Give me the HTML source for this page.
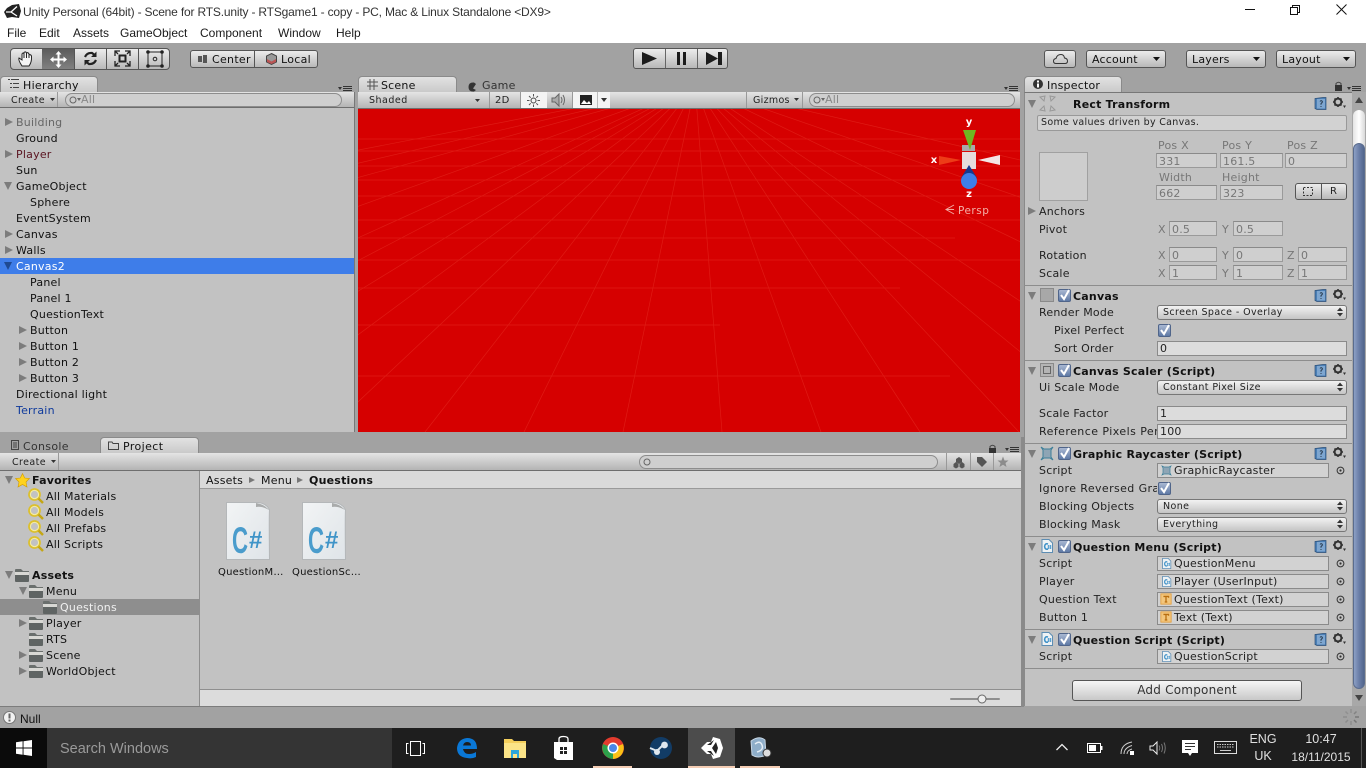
<!DOCTYPE html>
<html><head><meta charset="utf-8"><title>Unity</title>
<style>
html,body{margin:0;padding:0;width:1366px;height:768px;overflow:hidden;background:#a2a2a2}
*{box-sizing:border-box}
div,span{position:absolute}
svg{position:absolute;overflow:visible}
.u{font:11px/16px "DejaVu Sans","Liberation Sans",sans-serif;color:#111;white-space:nowrap;height:16px;margin-top:1px;letter-spacing:.22px}
.w{font:12px/16px "Liberation Sans",sans-serif;color:#1a1a1a;white-space:nowrap;height:16px}
.l{color:#222}
.g{color:#777}
.b{font-weight:bold;color:#111}
.tb{background:linear-gradient(#e4e4e4,#b4b4b4);height:16px;border-bottom:1px solid #6e6e6e}
.btn{background:linear-gradient(#ececec,#b8b8b8);border:1px solid #555;border-radius:3px;height:18px}
.tab{background:linear-gradient(#e2e2e2,#c8c8c8);border-radius:4px 4px 0 0;border:1px solid #8a8a8a;border-bottom:none}
.f{background:#cfcfcf;border:1px solid #9a9a9a;border-top-color:#8a8a8a;height:15px;font:11px/15px "DejaVu Sans",sans-serif;color:#777;padding-left:2px;white-space:nowrap;letter-spacing:.2px}
.fd{background:#dcdcdc;color:#222;border-color:#8a8a8a;line-height:13px}
.o{background:#d2d2d2;border:1px solid #8a8a8a;height:15px;left:1157px;width:172px;font:11px/13px "DejaVu Sans",sans-serif;color:#222;padding-left:16px;white-space:nowrap;letter-spacing:.2px}
.dd{background:linear-gradient(#f2f2f2,#c4c4c4);border:1px solid #777;border-radius:3px;height:15px;left:1157px;width:190px;font:9.5px/13px "DejaVu Sans",sans-serif;color:#222;padding-left:5px;white-space:nowrap;letter-spacing:.4px}
.sep{left:1024px;width:328px;height:1px;background:#8d8d8d}
.ck{width:13px;height:13px;background:linear-gradient(#a9b8d2,#5f7aa6);border:1px solid #50658a;border-radius:2px}
.cc{font:bold 37px/36px "Liberation Sans",sans-serif;color:#4a9ccc;height:36px;transform:scaleX(.6);transform-origin:left center;white-space:nowrap}
.ch{font:bold 24px/24px "Liberation Sans",sans-serif;color:#3f94c8;height:24px;white-space:nowrap}
</style></head>
<body>
<svg width="0" height="0" style="position:absolute">
<defs>
<linearGradient id="dg" x1="0" y1="0" x2="1" y2="1"><stop offset="0" stop-color="#f2f4f5"/><stop offset="1" stop-color="#dfe4e8"/></linearGradient>
<symbol id="tr" viewBox="0 0 8 8"><path d="M0 0L8 4L0 8Z" fill="#7c7c7c"/></symbol>
<symbol id="td" viewBox="0 0 8 8"><path d="M0 0H8L4 8Z" fill="#7c7c7c"/></symbol>
<symbol id="book" viewBox="0 0 13 13"><path d="M1 1.500L9 .5H12V12.500H3L1 11.500Z" fill="#4b7fb5" stroke="#2c4f78" stroke-width=".7"/><path d="M3 2H11V11.500H3Z" fill="#7ea6d0"/><path d="M6 4.500Q7 3 8.300 4.300Q8.600 5.600 7 6.500V7.800M7 9V10" stroke="#234" stroke-width=".9" fill="none"/></symbol>
<symbol id="gear" viewBox="0 0 13 12"><circle cx="5" cy="5" r="3.400" fill="none" stroke="#333" stroke-width="2"/><path d="M5 0V2M5 8V10M0 5H2M8 5H10M1.500 1.500L3 3M7 7L8.500 8.500M8.500 1.500L7 3M3 7L1.500 8.500" stroke="#333" stroke-width="1.600"/><path d="M10 8.500H13L11.500 11Z" fill="#333"/></symbol>
<symbol id="check" viewBox="0 0 13 13"><path d="M3 6L6 10L11 1" fill="none" stroke="#fff" stroke-width="2"/></symbol>
<symbol id="dot" viewBox="0 0 9 9"><circle cx="4.500" cy="4.500" r="3.400" fill="none" stroke="#333" stroke-width="1"/><circle cx="4.500" cy="4.500" r="1.100" fill="#333"/></symbol>
<symbol id="arr" viewBox="0 0 6 10"><path d="M0 4L3 .5L6 4ZM0 6L3 9.500L6 6Z" fill="#333"/></symbol>
<symbol id="folder" viewBox="0 0 16 14"><path d="M1 2Q1 1 2 1H7L9 3H15V13H1Z" fill="#6a6f6d"/><path d="M1 4H15V7H1Z" fill="#d8d8d4"/><path d="M1 7H15V13Q15 14 14 14H2Q1 14 1 13Z" fill="#5f6463"/></symbol>
<symbol id="mag" viewBox="0 0 16 16"><circle cx="6.500" cy="6.500" r="5.500" fill="none" stroke="#dcc02e" stroke-width="1.800"/><circle cx="6.500" cy="6.500" r="4.100" fill="none" stroke="#f8ee9c" stroke-width="1"/><path d="M10.500 10.500L15 15" stroke="#c4a614" stroke-width="2.400"/></symbol>
<symbol id="cs" viewBox="0 0 14 14"><path d="M2 .5H9L12.500 4V13.500H2Z" fill="#eef2f4" stroke="#5d8db3"/><path d="M8 5Q5 4 4.600 7.500Q5 11 8 10" stroke="#3a8fc7" fill="none" stroke-width="1.500"/><path d="M8.500 6V10M10.500 6V10M7.500 7H11.500M7.500 9H11.500" stroke="#3a8fc7" stroke-width=".7"/></symbol>
<symbol id="textI" viewBox="0 0 14 14"><rect x="1" y="1" width="12" height="12" fill="#f2c67d" stroke="#e49e3a"/><path d="M4 4H10V5.500M7 4V10.500M5.500 10.500H8.500" stroke="#b86e10" stroke-width="1.500" fill="none"/></symbol>
<symbol id="doc" viewBox="0 0 44 58"><path d="M.5 .5H33Q41 2 43.500 8Q43 14 43.500 57.500H.5Z" fill="url(#dg)" stroke="#b4b7b9"/><path d="M30 1Q38 2 43 8Q36 4 30 5Z" fill="#a9abab"/></symbol>
</defs>
</svg>

<!-- title + menu -->
<div style="left:0;top:0;width:1366px;height:43px;background:#fff"></div>
<svg style="left:3px;top:4px" width="20" height="16" viewBox="0 0 20 16"><path d="M9 1L16 0L18 7L16 14L9 13L4 14L1 8L4 4Z" fill="#222"/><path d="M8 8L14 2.500M8 8L14 12M8 8H3" stroke="#fff" stroke-width="1.300"/></svg>
<div class="w" style="left:23px;top:4px;color:#333;letter-spacing:-.18px">Unity Personal (64bit) - Scene for RTS.unity - RTSgame1 - copy - PC, Mac &amp; Linux Standalone &lt;DX9&gt;</div>
<div class="w" style="left:7px;top:25px">File</div>
<div class="w" style="left:39px;top:25px">Edit</div>
<div class="w" style="left:73px;top:25px">Assets</div>
<div class="w" style="left:120px;top:25px">GameObject</div>
<div class="w" style="left:200px;top:25px">Component</div>
<div class="w" style="left:278px;top:25px">Window</div>
<div class="w" style="left:336px;top:25px">Help</div>
<svg style="left:1245px;top:9px" width="10" height="2"><rect width="10" height="1" fill="#111"/></svg>
<svg style="left:1290px;top:5px" width="10" height="10"><path d="M2.500 2.500V.5H9.500V7.500H7.500M.5 2.500H7.500V9.500H.5Z" fill="none" stroke="#111"/></svg>
<svg style="left:1336px;top:4px" width="11" height="11"><path d="M.5 .5L10.500 10.500M10.500 .5L.5 10.500" stroke="#111"/></svg>

<!-- toolbar -->
<div style="left:0;top:43px;width:1366px;height:685px;background:#a2a2a2"></div>
<div class="btn" style="left:10px;top:48px;width:160px;height:22px;border-radius:4px"></div>
<div style="left:42px;top:49px;width:33px;height:20px;background:linear-gradient(#5c5c5c,#808080)"></div>
<div style="left:74px;top:49px;width:1px;height:20px;background:#555"></div>
<div style="left:106px;top:49px;width:1px;height:20px;background:#555"></div>
<div style="left:138px;top:49px;width:1px;height:20px;background:#555"></div>
<svg style="left:17px;top:50px" width="19" height="18" viewBox="0 0 19 18"><path d="M5 16Q1 10 2 8L5 10V4Q6 2 7 4V8V2.500Q8.500 1 9.500 3V8V3Q11 2 12 4V8V5Q13.500 4 14.500 6Q15 12 12 16Z" fill="#f4f4f4" stroke="#222"/></svg>
<svg style="left:50px;top:51px" width="17" height="17" viewBox="0 0 17 17"><path d="M8.500 0L11.500 3.500H9.500V7.500H13.500V5.500L17 8.500L13.500 11.500V9.500H9.500V13.500H11.500L8.500 17L5.500 13.500H7.500V9.500H3.500V11.500L0 8.500L3.500 5.500V7.500H7.500V3.500H5.500Z" fill="#fff"/></svg>
<svg style="left:83px;top:51px" width="15" height="15" viewBox="0 0 15 15"><path d="M2 6Q4 1.500 9 2L11 3.500M13 9Q11 13.500 6 13L4 11.500" fill="none" stroke="#222" stroke-width="2.200"/><path d="M13.500 .5V6H8ZM1.500 14.500V9H7Z" fill="#222"/></svg>
<svg style="left:114px;top:50px" width="17" height="17" viewBox="0 0 17 17"><rect x="5.500" y="5.500" width="6" height="6" fill="none" stroke="#222" stroke-width="2"/><path d="M1 6V1H6M11 1H16V6M16 11V16H11M6 16H1V11M1 1L4 4M16 1L13 4M16 16L13 13M1 16L4 13" fill="none" stroke="#222" stroke-width="1.300"/></svg>
<svg style="left:146px;top:50px" width="18" height="18" viewBox="0 0 18 18"><rect x="2" y="2" width="14" height="14" fill="none" stroke="#222"/><g fill="#222"><circle cx="2" cy="2" r="1.800"/><circle cx="16" cy="2" r="1.800"/><circle cx="2" cy="16" r="1.800"/><circle cx="16" cy="16" r="1.800"/></g><circle cx="9" cy="9" r="1.800" fill="none" stroke="#222"/></svg>

<div class="btn" style="left:190px;top:50px;width:128px;height:18px"></div>
<div style="left:254px;top:51px;width:1px;height:16px;background:#555"></div>
<svg style="left:198px;top:55px" width="10" height="8"><path d="M0 1H4V7H0ZM5 0H9V8H5Z" fill="#555"/></svg>
<div class="u" style="left:212px;top:51px;letter-spacing:.3px">Center</div>
<svg style="left:266px;top:53px" width="11" height="12" viewBox="0 0 11 12"><path d="M5.500 .5L10.500 3V9L5.500 11.500L.5 9V3Z" fill="#999" stroke="#444"/><path d="M1 6L5.500 8.500L10 6V9L5.500 11L1 9Z" fill="#b55"/></svg>
<div class="u" style="left:281px;top:51px;letter-spacing:.3px">Local</div>

<div class="btn" style="left:633px;top:48px;width:95px;height:21px"></div>
<div style="left:665px;top:49px;width:1px;height:19px;background:#666"></div>
<div style="left:697px;top:49px;width:1px;height:19px;background:#666"></div>
<svg style="left:642px;top:52px" width="15" height="13"><path d="M0 0L15 6.500L0 13Z" fill="#1c1c1c"/></svg>
<svg style="left:677px;top:52px" width="9" height="13"><path d="M0 0H3V13H0ZM6 0H9V13H6Z" fill="#1c1c1c"/></svg>
<svg style="left:706px;top:52px" width="16" height="13"><path d="M0 0L12 6.500L0 13ZM12 0H16V13H12Z" fill="#1c1c1c"/></svg>

<div class="btn" style="left:1044px;top:50px;width:32px"></div>
<svg style="left:1053px;top:54px" width="15" height="10" viewBox="0 0 15 10"><path d="M3 9.500Q.5 9.500 .5 7Q.5 5 3 4.500Q4 .5 8 .5Q11 .5 11.500 4Q14.500 4.500 14.500 7Q14.500 9.500 12 9.500Z" fill="none" stroke="#333"/></svg>
<div class="btn" style="left:1086px;top:50px;width:80px"></div>
<div class="u" style="left:1092px;top:51px;letter-spacing:.2px">Account</div>
<svg style="left:1153px;top:57px" width="7" height="4"><path d="M0 0H7L3.500 4Z" fill="#111"/></svg>
<div class="btn" style="left:1186px;top:50px;width:80px"></div>
<div class="u" style="left:1192px;top:51px;letter-spacing:.2px">Layers</div>
<svg style="left:1253px;top:57px" width="7" height="4"><path d="M0 0H7L3.500 4Z" fill="#111"/></svg>
<div class="btn" style="left:1276px;top:50px;width:80px"></div>
<div class="u" style="left:1282px;top:51px;letter-spacing:.2px">Layout</div>
<svg style="left:1343px;top:57px" width="7" height="4"><path d="M0 0H7L3.500 4Z" fill="#111"/></svg>

<!-- Hierarchy -->
<div class="tab" style="left:0;top:76px;width:98px;height:17px"></div>
<svg style="left:8px;top:79px" width="11" height="9"><path d="M0 .5H2M3 .5H11M2 4.500H4M5 4.500H11M2 8.500H4M5 8.500H11" stroke="#444"/></svg>
<div class="u" style="left:23px;top:77px;letter-spacing:.3px">Hierarchy</div>
<svg style="left:338px;top:85px" width="15" height="7"><path d="M0 2H4L2 5Z" fill="#333"/><path d="M5 1.500H14M5 3.500H14M5 5.500H14" stroke="#333"/></svg>
<div class="tb" style="left:0;top:92px;width:354px"></div>
<div class="u" style="left:11px;top:92px;font-size:9.500px;letter-spacing:.4px;color:#222">Create</div>
<svg style="left:50px;top:98px" width="5" height="3"><path d="M0 0H5L2.500 3Z" fill="#333"/></svg>
<div style="left:57px;top:92px;width:1px;height:15px;background:#999"></div>
<div style="left:65px;top:93px;width:277px;height:14px;border:1px solid #8d8d8d;border-radius:7px;background:#cfcfcf"></div>
<svg style="left:69px;top:96px" width="12" height="9"><circle cx="4" cy="4" r="3" fill="none" stroke="#666"/><path d="M8 2H12L10 5Z" fill="#666"/></svg>
<div class="u" style="left:81px;top:91px;color:#888">All</div>

<div style="left:0;top:108px;width:354px;height:324px;background:#c2c2c2"></div>
<div style="left:354px;top:92px;width:1px;height:340px;background:#777"></div>
<div style="left:0;top:258px;width:354px;height:16px;background:#3e7de9"></div>
<svg style="left:5px;top:118px" width="8" height="8"><use href="#tr"/></svg>
<svg style="left:5px;top:150px" width="8" height="8"><use href="#tr"/></svg>
<svg style="left:4px;top:182px" width="8" height="8"><use href="#td"/></svg>
<svg style="left:5px;top:230px" width="8" height="8"><use href="#tr"/></svg>
<svg style="left:5px;top:246px" width="8" height="8"><use href="#tr"/></svg>
<svg style="left:4px;top:262px" width="8" height="8"><path d="M0 0H8L4 8Z" fill="#1f4a92"/></svg>
<svg style="left:19px;top:326px" width="8" height="8"><use href="#tr"/></svg>
<svg style="left:19px;top:342px" width="8" height="8"><use href="#tr"/></svg>
<svg style="left:19px;top:358px" width="8" height="8"><use href="#tr"/></svg>
<svg style="left:19px;top:374px" width="8" height="8"><use href="#tr"/></svg>
<div class="u" style="left:16px;top:114px;color:#666">Building</div>
<div class="u" style="left:16px;top:130px">Ground</div>
<div class="u" style="left:16px;top:146px;color:#5a1420">Player</div>
<div class="u" style="left:16px;top:162px">Sun</div>
<div class="u" style="left:16px;top:178px">GameObject</div>
<div class="u" style="left:30px;top:194px">Sphere</div>
<div class="u" style="left:16px;top:210px">EventSystem</div>
<div class="u" style="left:16px;top:226px">Canvas</div>
<div class="u" style="left:16px;top:242px">Walls</div>
<div class="u" style="left:16px;top:258px;color:#fff">Canvas2</div>
<div class="u" style="left:30px;top:274px">Panel</div>
<div class="u" style="left:30px;top:290px">Panel 1</div>
<div class="u" style="left:30px;top:306px">QuestionText</div>
<div class="u" style="left:30px;top:322px">Button</div>
<div class="u" style="left:30px;top:338px">Button 1</div>
<div class="u" style="left:30px;top:354px">Button 2</div>
<div class="u" style="left:30px;top:370px">Button 3</div>
<div class="u" style="left:16px;top:386px">Directional light</div>
<div class="u" style="left:16px;top:402px;color:#0f3a9c">Terrain</div>

<!-- Scene -->
<div class="tab" style="left:358px;top:76px;width:99px;height:17px"></div>
<svg style="left:367px;top:79px" width="11" height="11"><path d="M3 0V11M7 0V11M0 3H11M0 7H11" stroke="#555"/></svg>
<div class="u" style="left:381px;top:77px;letter-spacing:.2px">Scene</div>
<svg style="left:468px;top:82px" width="9" height="10"><path d="M6 .5Q.5 0 .5 5Q.5 10 6 9.500L8 8L5 6.500L8 2Z" fill="#333"/></svg>
<div class="u" style="left:482px;top:77px;letter-spacing:.2px;color:#333">Game</div>
<svg style="left:1004px;top:85px" width="15" height="7"><path d="M0 2H4L2 5Z" fill="#333"/><path d="M5 1.500H14M5 3.500H14M5 5.500H14" stroke="#333"/></svg>
<div class="tb" style="left:358px;top:92px;width:662px;height:17px"></div>
<div class="u" style="left:369px;top:92px;font-size:9.500px;letter-spacing:.5px;color:#222">Shaded</div>
<svg style="left:475px;top:99px" width="5" height="3"><path d="M0 0H5L2.500 3Z" fill="#333"/></svg>
<div style="left:489px;top:92px;width:1px;height:16px;background:#999"></div>
<div class="u" style="left:495px;top:92px;font-size:10px;color:#222">2D</div>
<div style="left:520px;top:92px;width:1px;height:16px;background:#999"></div>
<div style="left:521px;top:92px;width:26px;height:16px;background:#f4f4f4"></div>
<svg style="left:527px;top:94px" width="13" height="13"><circle cx="6.500" cy="6.500" r="2.500" fill="none" stroke="#444"/><path d="M6.500 0V2.500M6.500 10.500V13M0 6.500H2.500M10.500 6.500H13M2 2L3.700 3.700M11 2L9.300 3.700M2 11L3.700 9.300M11 11L9.300 9.300" stroke="#555"/></svg>
<svg style="left:552px;top:93px" width="15" height="14"><path d="M0 5H3L7 1V13L3 9H0Z" fill="#aaa" stroke="#666"/><path d="M9 4Q11 7 9 10M11 2Q14 7 11 12" fill="none" stroke="#666"/></svg>
<div style="left:572px;top:92px;width:1px;height:16px;background:#999"></div>
<div style="left:573px;top:92px;width:37px;height:16px;background:#f4f4f4"></div>
<svg style="left:580px;top:95px" width="12" height="10"><rect width="12" height="10" fill="#222"/><path d="M1 9L4 5L7 8L9 6L11 9Z" fill="#fff"/></svg>
<div style="left:597px;top:92px;width:1px;height:16px;background:#bbb"></div>
<svg style="left:601px;top:98px" width="6" height="4"><path d="M0 0H6L3 4Z" fill="#333"/></svg>
<div style="left:746px;top:92px;width:1px;height:16px;background:#999"></div>
<div class="u" style="left:753px;top:92px;font-size:9.500px;letter-spacing:.3px;color:#222">Gizmos</div>
<svg style="left:794px;top:98px" width="5" height="3"><path d="M0 0H5L2.500 3Z" fill="#333"/></svg>
<div style="left:802px;top:92px;width:1px;height:16px;background:#999"></div>
<div style="left:809px;top:93px;width:206px;height:14px;border:1px solid #8d8d8d;border-radius:7px;background:#cfcfcf"></div>
<svg style="left:813px;top:96px" width="12" height="9"><circle cx="4" cy="4" r="3" fill="none" stroke="#666"/><path d="M8 2H12L10 5Z" fill="#666"/></svg>
<div class="u" style="left:825px;top:91px;color:#888">All</div>

<svg style="left:358px;top:109px;overflow:hidden" width="662" height="323" viewBox="358 109 662 323">
<rect x="358" y="109" width="662" height="323" fill="#d60000"/>
<g stroke="#ea3c2e" stroke-width=".7" fill="none" opacity=".45">
<path d="M358 139H1020M358 151H1020M358 166H1020M358 180H1020M358 196H1020M358 220H1020M358 238H955M358 260H1020M358 288H900M358 325H720M358 376H950"/>
<path d="M695 85L-1100 432M695 85L-800 432M695 85L-569 432M695 85L-268 432M695 85L-70 432M695 85L29 432M695 85L128 432M695 85L227 432M695 85L326 432M695 85L425 432M695 85L524 432M695 85L623 432M695 85L722 432M695 85L821 432M695 85L920 432M695 85L1019 432M695 85L1118 432M695 85L1217 432M695 85L1415 432M695 85L1700 432M695 85L2200 432"/>
</g>
<!-- gizmo -->
<rect x="962" y="145" width="13" height="6" fill="#a9a9a9"/>
<rect x="962" y="152" width="14" height="17" fill="#e6dcdc"/>
<path d="M963 130H976L970 150Z" fill="#6fb721"/>
<path d="M939 156L961 160L939 165Z" fill="#ed3c17"/>
<path d="M1000 155L978 160L1000 165Z" fill="#f4e6e6"/>
<path d="M969 165L961 178H977Z" fill="#173a8e"/>
<circle cx="969" cy="181" r="8" fill="#3e7fe8"/>
<text x="969" y="125" text-anchor="middle" font-family="DejaVu Sans" font-weight="bold" font-size="10" fill="#fff">y</text>
<text x="934" y="163" text-anchor="middle" font-family="DejaVu Sans" font-weight="bold" font-size="10" fill="#fff">x</text>
<text x="969" y="197" text-anchor="middle" font-family="DejaVu Sans" font-weight="bold" font-size="10" fill="#fff">z</text>
<path d="M954 205L946 209.500L954 214M946 209.500H954" fill="none" stroke="#f1a8a0"/>
<text x="958" y="214" font-family="DejaVu Sans" font-size="10.500" letter-spacing=".5" fill="#f4b0a8">Persp</text>
</svg>

<!-- Bottom panel -->
<div class="tab" style="left:100px;top:437px;width:99px;height:17px"></div>
<svg style="left:11px;top:440px" width="8" height="10"><rect x=".5" y=".5" width="7" height="9" fill="none" stroke="#444"/><path d="M2 3H6M2 5H6M2 7H6" stroke="#444"/></svg>
<div class="u" style="left:23px;top:438px;letter-spacing:.3px;color:#333">Console</div>
<svg style="left:108px;top:441px" width="11" height="9"><path d="M.5 8.500V1H4L5 2.500H10.500V8.500Z" fill="none" stroke="#444"/></svg>
<div class="u" style="left:123px;top:438px;letter-spacing:.4px">Project</div>
<svg style="left:988px;top:444px" width="9" height="9"><path d="M2 4V2.500Q4.500 0 7 2.500V4" fill="none" stroke="#444"/><rect x="1" y="4" width="7" height="5" fill="#333"/></svg>
<svg style="left:1005px;top:446px" width="15" height="7"><path d="M0 2H4L2 5Z" fill="#333"/><path d="M5 1.500H14M5 3.500H14M5 5.500H14" stroke="#333"/></svg>
<div class="tb" style="left:0;top:453px;width:1021px;height:18px"></div>
<div class="u" style="left:12px;top:454px;font-size:9.500px;letter-spacing:.4px;color:#222">Create</div>
<svg style="left:51px;top:460px" width="5" height="3"><path d="M0 0H5L2.500 3Z" fill="#333"/></svg>
<div style="left:58px;top:453px;width:1px;height:17px;background:#999"></div>
<div style="left:639px;top:455px;width:299px;height:14px;border:1px solid #8d8d8d;border-radius:7px;background:#cfcfcf"></div>
<svg style="left:643px;top:458px" width="9" height="9"><circle cx="4" cy="4" r="3" fill="none" stroke="#666"/></svg>
<div style="left:946px;top:453px;width:1px;height:17px;background:#999"></div>
<svg style="left:953px;top:456px" width="12" height="12"><path d="M6 1L9 3V6L6 8L3 6V3ZM3 6L5.500 8V11L3 12.500L.5 11V8ZM9 6L11.500 8V11L9 12.500L6.500 11V8Z" fill="#555"/></svg>
<div style="left:970px;top:453px;width:1px;height:17px;background:#999"></div>
<svg style="left:976px;top:456px" width="12" height="12"><path d="M1 1H6L11 6L6 11L1 6Z" fill="#555"/></svg>
<div style="left:993px;top:453px;width:1px;height:17px;background:#999"></div>
<svg style="left:997px;top:456px" width="12" height="12"><path d="M6 .5L7.500 4.500H11.500L8.500 7L9.500 11L6 8.700L2.500 11L3.500 7L.5 4.500H4.500Z" fill="#8c8c8c"/></svg>

<div style="left:0;top:471px;width:199px;height:235px;background:#c2c2c2"></div>
<div style="left:199px;top:471px;width:1px;height:235px;background:#8e8e8e"></div>
<div style="left:200px;top:471px;width:821px;height:18px;background:#dadada;border-bottom:1px solid #9a9a9a"></div>
<div style="left:200px;top:489px;width:821px;height:200px;background:#c2c2c2"></div>
<div style="left:200px;top:689px;width:821px;height:17px;background:#dcdcdc;border-top:1px solid #8f8f8f"></div>
<div style="left:0;top:706px;width:1021px;height:1px;background:#7c7c7c"></div>
<div style="left:1021px;top:437px;width:3px;height:270px;background:#8a8a8a"></div>

<svg style="left:950px;top:695px" width="55" height="10"><rect x="0" y="3" width="50" height="2" rx="1" fill="#8f8f8f"/><circle cx="32" cy="4" r="4" fill="#eee" stroke="#666"/></svg>

<svg style="left:5px;top:476px" width="8" height="8"><use href="#td"/></svg>
<svg style="left:15px;top:473px" width="15" height="14" viewBox="0 0 15 14"><path d="M7.500 .5L9.700 5L14.500 5.500L11 9L12 14L7.500 11.500L3 14L4 9L.5 5.500L5.300 5Z" fill="#ffd21e" stroke="#d09b00" stroke-width=".6"/></svg>
<div class="u b" style="left:32px;top:472px">Favorites</div>
<svg style="left:28px;top:488px" width="16" height="16"><use href="#mag"/></svg>
<svg style="left:28px;top:504px" width="16" height="16"><use href="#mag"/></svg>
<svg style="left:28px;top:520px" width="16" height="16"><use href="#mag"/></svg>
<svg style="left:28px;top:536px" width="16" height="16"><use href="#mag"/></svg>
<div class="u" style="left:46px;top:488px">All Materials</div>
<div class="u" style="left:46px;top:504px">All Models</div>
<div class="u" style="left:46px;top:520px">All Prefabs</div>
<div class="u" style="left:46px;top:536px">All Scripts</div>
<svg style="left:5px;top:571px" width="8" height="8"><use href="#td"/></svg>
<svg style="left:14px;top:568px" width="16" height="14"><use href="#folder"/></svg>
<div class="u b" style="left:32px;top:567px">Assets</div>
<svg style="left:19px;top:587px" width="8" height="8"><use href="#td"/></svg>
<svg style="left:28px;top:584px" width="16" height="14"><use href="#folder"/></svg>
<div class="u" style="left:46px;top:583px">Menu</div>
<div style="left:0;top:599px;width:199px;height:16px;background:#8e8e8e"></div>
<svg style="left:42px;top:600px" width="16" height="14"><use href="#folder"/></svg>
<div class="u" style="left:60px;top:599px;color:#f0f0f0">Questions</div>
<svg style="left:19px;top:619px" width="8" height="8"><use href="#tr"/></svg>
<svg style="left:28px;top:616px" width="16" height="14"><use href="#folder"/></svg>
<div class="u" style="left:46px;top:615px">Player</div>
<svg style="left:28px;top:632px" width="16" height="14"><use href="#folder"/></svg>
<div class="u" style="left:46px;top:631px">RTS</div>
<svg style="left:19px;top:651px" width="8" height="8"><use href="#tr"/></svg>
<svg style="left:28px;top:648px" width="16" height="14"><use href="#folder"/></svg>
<div class="u" style="left:46px;top:647px">Scene</div>
<svg style="left:19px;top:667px" width="8" height="8"><use href="#tr"/></svg>
<svg style="left:28px;top:664px" width="16" height="14"><use href="#folder"/></svg>
<div class="u" style="left:46px;top:663px">WorldObject</div>

<div class="u" style="left:206px;top:472px">Assets</div>
<svg style="left:249px;top:477px" width="6" height="6"><path d="M0 0L6 3L0 6Z" fill="#777"/></svg>
<div class="u" style="left:261px;top:472px">Menu</div>
<svg style="left:297px;top:477px" width="6" height="6"><path d="M0 0L6 3L0 6Z" fill="#777"/></svg>
<div class="u b" style="left:309px;top:472px">Questions</div>

<svg style="left:226px;top:502px" width="44" height="58"><use href="#doc"/></svg>
<svg style="left:302px;top:502px" width="44" height="58"><use href="#doc"/></svg>
<div class="cc" style="left:232px;top:523px">C</div>
<div class="ch" style="left:249px;top:529px">#</div>
<div class="cc" style="left:308px;top:523px">C</div>
<div class="ch" style="left:325px;top:529px">#</div>
<div class="u" style="left:218px;top:564px;font-size:10px">QuestionM…</div>
<div class="u" style="left:292px;top:564px;font-size:10px">QuestionSc…</div>

<!-- status -->
<svg style="left:3px;top:711px" width="13" height="13"><circle cx="6.500" cy="6.500" r="6" fill="#f2f2f2" stroke="#777"/><rect x="5.500" y="2.500" width="2" height="5" fill="#666"/><rect x="5.500" y="8.500" width="2" height="2" fill="#666"/></svg>
<div class="w" style="left:20px;top:711px;color:#111">Null</div>

<!-- Inspector -->
<div class="tab" style="left:1024px;top:76px;width:98px;height:17px"></div>
<svg style="left:1033px;top:79px" width="10" height="10"><circle cx="5" cy="5" r="5" fill="#333"/><rect x="4" y="1.500" width="2" height="2" fill="#fff"/><rect x="4" y="4.500" width="2" height="4" fill="#fff"/></svg>
<div class="u" style="left:1047px;top:77px;letter-spacing:.2px">Inspector</div>
<svg style="left:1334px;top:81px" width="9" height="10"><path d="M2 4V2.500Q4.500 0 7 2.500V4" fill="none" stroke="#444"/><rect x="1" y="4" width="7" height="6" fill="#333"/></svg>
<svg style="left:1347px;top:85px" width="15" height="7"><path d="M0 2H4L2 5Z" fill="#333"/><path d="M5 1.500H14M5 3.500H14M5 5.500H14" stroke="#333"/></svg>
<div style="left:1024px;top:92px;width:328px;height:614px;background:#c2c2c2;border-top:1px solid #777;border-left:1px solid #8a8a8a"></div>
<div style="left:1352px;top:92px;width:14px;height:614px;background:#a8a8a8"></div>
<svg style="left:1355px;top:97px" width="8" height="6"><path d="M0 6H8L4 0Z" fill="#444"/></svg>
<svg style="left:1355px;top:695px" width="8" height="6"><path d="M0 0H8L4 6Z" fill="#444"/></svg>
<div style="left:1353px;top:110px;width:12px;height:40px;background:linear-gradient(90deg,#e4e4e4,#fff,#d8d8d8);border-radius:6px 6px 0 0"></div>
<div style="left:1353px;top:143px;width:12px;height:546px;background:linear-gradient(90deg,#8c9fc4,#6b7fa8,#52658c);border-radius:6px;border:1px solid #5a6c8e"></div>

<div class="sep" style="top:285px"></div>
<div class="sep" style="top:360px"></div>
<div class="sep" style="top:443px"></div>
<div class="sep" style="top:536px"></div>
<div class="sep" style="top:629px"></div>
<div class="sep" style="top:668px"></div>

<!-- foldouts -->
<svg style="left:1028px;top:100px" width="8" height="8"><use href="#td"/></svg>
<svg style="left:1028px;top:292px" width="8" height="8"><use href="#td"/></svg>
<svg style="left:1028px;top:367px" width="8" height="8"><use href="#td"/></svg>
<svg style="left:1028px;top:450px" width="8" height="8"><use href="#td"/></svg>
<svg style="left:1028px;top:543px" width="8" height="8"><use href="#td"/></svg>
<svg style="left:1028px;top:636px" width="8" height="8"><use href="#td"/></svg>

<!-- help + gear -->
<svg style="left:1314px;top:97px" width="13" height="13"><use href="#book"/></svg><svg style="left:1333px;top:97px" width="13" height="12"><use href="#gear"/></svg>
<svg style="left:1314px;top:289px" width="13" height="13"><use href="#book"/></svg><svg style="left:1333px;top:289px" width="13" height="12"><use href="#gear"/></svg>
<svg style="left:1314px;top:364px" width="13" height="13"><use href="#book"/></svg><svg style="left:1333px;top:364px" width="13" height="12"><use href="#gear"/></svg>
<svg style="left:1314px;top:447px" width="13" height="13"><use href="#book"/></svg><svg style="left:1333px;top:447px" width="13" height="12"><use href="#gear"/></svg>
<svg style="left:1314px;top:540px" width="13" height="13"><use href="#book"/></svg><svg style="left:1333px;top:540px" width="13" height="12"><use href="#gear"/></svg>
<svg style="left:1314px;top:633px" width="13" height="13"><use href="#book"/></svg><svg style="left:1333px;top:633px" width="13" height="12"><use href="#gear"/></svg>

<!-- headers -->
<svg style="left:1039px;top:95px" width="17" height="17" viewBox="0 0 17 17"><g fill="none" stroke="#999"><path d="M1 2L6 1L5 6ZM16 2L11 1L12 6ZM1 15L6 16L5 11ZM16 15L11 16L12 11Z"/></g></svg>
<div class="u b" style="left:1073px;top:96px">Rect Transform</div>
<div style="left:1037px;top:115px;width:310px;height:16px;background:#d2d2d2;border:1px solid #999;border-radius:2px"></div>
<div class="u" style="left:1041px;top:114px;font-size:9.500px;letter-spacing:.3px;color:#222">Some values driven by Canvas.</div>

<div class="u g" style="left:1158px;top:137px">Pos X</div>
<div class="u g" style="left:1222px;top:137px">Pos Y</div>
<div class="u g" style="left:1287px;top:137px">Pos Z</div>
<div class="f" style="left:1156px;top:153px;width:61px">331</div>
<div class="f" style="left:1220px;top:153px;width:63px">161.5</div>
<div class="f" style="left:1285px;top:153px;width:62px">0</div>
<div class="u g" style="left:1159px;top:169px">Width</div>
<div class="u g" style="left:1222px;top:169px">Height</div>
<div class="f" style="left:1156px;top:185px;width:61px">662</div>
<div class="f" style="left:1220px;top:185px;width:63px">323</div>
<div style="left:1039px;top:152px;width:49px;height:49px;background:#cdcdcd;border:1px solid #a0a0a0"></div>
<div class="btn" style="left:1295px;top:183px;width:52px;height:17px"></div>
<div style="left:1321px;top:184px;width:1px;height:15px;background:#555"></div>
<svg style="left:1303px;top:187px" width="10" height="9"><rect x=".5" y=".5" width="9" height="8" fill="none" stroke="#333" stroke-dasharray="2 1.500"/></svg>
<div class="u" style="left:1330px;top:183px;font-size:10px;color:#222">R</div>

<svg style="left:1028px;top:207px" width="8" height="8"><use href="#tr"/></svg>
<div class="u l" style="left:1039px;top:203px">Anchors</div>
<div class="u l" style="left:1039px;top:221px">Pivot</div>
<div class="u g" style="left:1158px;top:221px">X</div>
<div class="f" style="left:1169px;top:221px;width:48px">0.5</div>
<div class="u g" style="left:1222px;top:221px">Y</div>
<div class="f" style="left:1233px;top:221px;width:50px">0.5</div>

<div class="u l" style="left:1039px;top:247px">Rotation</div>
<div class="u g" style="left:1158px;top:247px">X</div>
<div class="f" style="left:1169px;top:247px;width:48px">0</div>
<div class="u g" style="left:1222px;top:247px">Y</div>
<div class="f" style="left:1233px;top:247px;width:50px">0</div>
<div class="u g" style="left:1287px;top:247px">Z</div>
<div class="f" style="left:1298px;top:247px;width:49px">0</div>
<div class="u l" style="left:1039px;top:265px">Scale</div>
<div class="u g" style="left:1158px;top:265px">X</div>
<div class="f" style="left:1169px;top:265px;width:48px">1</div>
<div class="u g" style="left:1222px;top:265px">Y</div>
<div class="f" style="left:1233px;top:265px;width:50px">1</div>
<div class="u g" style="left:1287px;top:265px">Z</div>
<div class="f" style="left:1298px;top:265px;width:49px">1</div>

<!-- Canvas -->
<div style="left:1040px;top:288px;width:14px;height:14px;background:#a8a8a8;border:1px solid #8a8a8a"></div>
<div class="ck" style="left:1058px;top:289px"></div><svg style="left:1058px;top:289px" width="13" height="13"><use href="#check"/></svg>
<div class="u b" style="left:1073px;top:288px">Canvas</div>
<div class="u l" style="left:1039px;top:304px">Render Mode</div>
<div class="dd" style="top:305px">Screen Space - Overlay</div>
<svg style="left:1337px;top:307px" width="6" height="10"><use href="#arr"/></svg>
<div class="u l" style="left:1054px;top:322px">Pixel Perfect</div>
<div class="ck" style="left:1158px;top:324px"></div><svg style="left:1158px;top:324px" width="13" height="13"><use href="#check"/></svg>
<div class="u l" style="left:1054px;top:340px">Sort Order</div>
<div class="f fd" style="left:1157px;top:341px;width:190px">0</div>

<!-- Canvas Scaler -->
<svg style="left:1040px;top:363px" width="14" height="14"><rect x=".5" y=".5" width="13" height="13" fill="#b4b4b4" stroke="#8a8a8a"/><rect x="3.500" y="3.500" width="7" height="7" fill="none" stroke="#666"/></svg>
<div class="ck" style="left:1058px;top:364px"></div><svg style="left:1058px;top:364px" width="13" height="13"><use href="#check"/></svg>
<div class="u b" style="left:1073px;top:363px">Canvas Scaler (Script)</div>
<div class="u l" style="left:1039px;top:379px">Ui Scale Mode</div>
<div class="dd" style="top:380px">Constant Pixel Size</div>
<svg style="left:1337px;top:382px" width="6" height="10"><use href="#arr"/></svg>
<div class="u l" style="left:1039px;top:405px">Scale Factor</div>
<div class="f fd" style="left:1157px;top:406px;width:190px">1</div>
<div class="u l" style="left:1039px;top:423px;width:118px;overflow:hidden;letter-spacing:.45px">Reference Pixels Per Unit</div>
<div class="f fd" style="left:1157px;top:424px;width:190px">100</div>

<!-- Graphic Raycaster -->
<svg style="left:1040px;top:446px" width="14" height="15"><path d="M1 1L4 3H10L13 1L11 4V11L13 14L10 12H4L1 14L3 11V4Z" fill="#8ea5b5" stroke="#3d7f99"/></svg>
<div class="ck" style="left:1058px;top:447px"></div><svg style="left:1058px;top:447px" width="13" height="13"><use href="#check"/></svg>
<div class="u b" style="left:1073px;top:446px">Graphic Raycaster (Script)</div>
<div class="u l" style="left:1039px;top:462px">Script</div>
<div class="o" style="top:463px">GraphicRaycaster</div>
<svg style="left:1161px;top:465px" width="11" height="11"><path d="M1 1L3 2H8L10 1L9 3V8L10 10L8 9H3L1 10L2 8V3Z" fill="#8ea5b5" stroke="#3d7f99" stroke-width=".7"/></svg>
<svg style="left:1336px;top:466px" width="9" height="9"><use href="#dot"/></svg>
<div class="u l" style="left:1039px;top:480px;width:118px;overflow:hidden;letter-spacing:.4px">Ignore Reversed Graphics</div>
<div class="ck" style="left:1158px;top:482px"></div><svg style="left:1158px;top:482px" width="13" height="13"><use href="#check"/></svg>
<div class="u l" style="left:1039px;top:498px">Blocking Objects</div>
<div class="dd" style="top:499px">None</div>
<svg style="left:1337px;top:501px" width="6" height="10"><use href="#arr"/></svg>
<div class="u l" style="left:1039px;top:516px">Blocking Mask</div>
<div class="dd" style="top:517px">Everything</div>
<svg style="left:1337px;top:519px" width="6" height="10"><use href="#arr"/></svg>

<!-- Question Menu -->
<svg style="left:1040px;top:539px" width="14" height="14"><use href="#cs"/></svg>
<div class="ck" style="left:1058px;top:540px"></div><svg style="left:1058px;top:540px" width="13" height="13"><use href="#check"/></svg>
<div class="u b" style="left:1073px;top:539px">Question Menu (Script)</div>
<div class="u l" style="left:1039px;top:555px">Script</div>
<div class="o" style="top:556px">QuestionMenu</div>
<svg style="left:1161px;top:558px" width="11" height="11" viewBox="0 0 14 14"><use href="#cs"/></svg>
<svg style="left:1336px;top:559px" width="9" height="9"><use href="#dot"/></svg>
<div class="u l" style="left:1039px;top:573px">Player</div>
<div class="o" style="top:574px">Player (UserInput)</div>
<svg style="left:1161px;top:576px" width="11" height="11" viewBox="0 0 14 14"><use href="#cs"/></svg>
<svg style="left:1336px;top:577px" width="9" height="9"><use href="#dot"/></svg>
<div class="u l" style="left:1039px;top:591px">Question Text</div>
<div class="o" style="top:592px">QuestionText (Text)</div>
<svg style="left:1160px;top:593px" width="12" height="12" viewBox="0 0 14 14"><use href="#textI"/></svg>
<svg style="left:1336px;top:595px" width="9" height="9"><use href="#dot"/></svg>
<div class="u l" style="left:1039px;top:609px">Button 1</div>
<div class="o" style="top:610px">Text (Text)</div>
<svg style="left:1160px;top:611px" width="12" height="12" viewBox="0 0 14 14"><use href="#textI"/></svg>
<svg style="left:1336px;top:613px" width="9" height="9"><use href="#dot"/></svg>

<!-- Question Script -->
<svg style="left:1040px;top:632px" width="14" height="14"><use href="#cs"/></svg>
<div class="ck" style="left:1058px;top:633px"></div><svg style="left:1058px;top:633px" width="13" height="13"><use href="#check"/></svg>
<div class="u b" style="left:1073px;top:632px">Question Script (Script)</div>
<div class="u l" style="left:1039px;top:648px">Script</div>
<div class="o" style="top:649px">QuestionScript</div>
<svg style="left:1161px;top:651px" width="11" height="11" viewBox="0 0 14 14"><use href="#cs"/></svg>
<svg style="left:1336px;top:652px" width="9" height="9"><use href="#dot"/></svg>

<div class="btn" style="left:1072px;top:680px;width:230px;height:21px;background:linear-gradient(#f6f6f6,#c8c8c8)"></div>
<div class="u" style="left:1072px;top:681px;width:230px;text-align:center;font-size:12px;color:#333">Add Component</div>

<svg style="left:1342px;top:708px" width="18" height="18" viewBox="0 0 18 18"><g stroke="#777" stroke-width="1.500"><path d="M9 1V5" opacity=".4"/><path d="M9 13V17" opacity=".5"/><path d="M1 9H5" opacity=".5"/><path d="M13 9H17"/><path d="M3.500 3.500L6 6" opacity=".4"/><path d="M14.500 3.500L12 6" opacity=".7"/><path d="M3.500 14.500L6 12" opacity=".5"/><path d="M14.500 14.500L12 12"/></g></svg>

<!-- Taskbar -->
<div style="left:0;top:728px;width:1366px;height:40px;background:#1e1e1e"></div>
<div style="left:0;top:728px;width:47px;height:40px;background:#0b0b0b"></div>
<div style="left:47px;top:728px;width:345px;height:40px;background:#343434"></div>
<svg style="left:16px;top:740px" width="16" height="16"><path d="M0 2.300L6.600 1.300V7.500H0ZM7.500 1.200L16 0V7.500H7.500ZM0 8.500H6.600V14.700L0 13.700ZM7.500 8.500H16V16L7.500 14.800Z" fill="#fff"/></svg>
<div class="w" style="left:60px;top:740px;font-size:14.500px;line-height:18px;height:18px;color:#9a9a9a">Search Windows</div>
<svg style="left:406px;top:741px" width="19" height="15"><path d="M4.500 .5H14.500V14.500H4.500ZM2.500 2.500H.5V12.500H2.500M16.500 2.500H18.500V12.500H16.500" fill="none" stroke="#fff"/></svg>
<svg style="left:456px;top:737px" width="22" height="22" viewBox="0 0 22 22"><path d="M1 11Q2 2 11 1Q21 1 21 12H7Q8 17 13 17Q17 17 20 15V20Q16 22 11 21Q1 20 1 11ZM7 8.500H15Q15 5 11 5Q8 5 7 8.500Z" fill="#0a78d7"/></svg>
<svg style="left:504px;top:738px" width="22" height="20" viewBox="0 0 22 20"><path d="M0 1H8L10 3H22V20H0Z" fill="#f4cf5c"/><rect x="0" y="5" width="22" height="15" fill="#fbe488"/><path d="M7 20V13H15V20H13V16H9V20Z" fill="#2aa6dc"/><rect x="7" y="12" width="8" height="4" fill="#2aa6dc"/></svg>
<svg style="left:553px;top:736px" width="21" height="25" viewBox="0 0 21 25"><path d="M1 6H20V24H4L1 22Z" fill="#fff"/><path d="M6 7V3Q6 .5 10.500 .5Q15 .5 15 3V7" fill="none" stroke="#fff" stroke-width="1.300"/><path d="M7 11H10V14H7ZM11 11H14V14H11ZM7 15H10V18H7ZM11 15H14V18H11Z" fill="#222"/></svg>
<svg style="left:602px;top:737px" width="22" height="22" viewBox="0 0 22 22"><circle cx="11" cy="11" r="11" fill="#e33b2e"/><path d="M11 11L1 7A11 11 0 0 0 11 22Z" fill="#2da14b"/><path d="M11 11L21 7A11 11 0 0 1 11 22Z" fill="#fbc116"/><circle cx="11" cy="11" r="5.500" fill="#fff"/><circle cx="11" cy="11" r="4" fill="#4a87e8"/></svg>
<svg style="left:650px;top:737px" width="22" height="22" viewBox="0 0 22 22"><circle cx="11" cy="11" r="11" fill="#123c66"/><circle cx="14.500" cy="8" r="3.400" fill="#dfe7ee"/><circle cx="7" cy="15" r="3" fill="#dfe7ee"/><path d="M0 11L7 14L12 9" stroke="#dfe7ee" stroke-width="2" fill="none"/></svg>
<div style="left:688px;top:728px;width:47px;height:40px;background:#4c4c4c"></div>
<svg style="left:700px;top:737px" width="24" height="22" viewBox="0 0 24 22"><path d="M13 0L20 2L23 11L20 20L13 22L11 17H7L1 11L7 5H11Z" fill="#fff"/><path d="M12 11L16 5L18 11L16 17ZM6 11H12M14 3L11 8H7ZM14 19L11 14H7Z" fill="#222"/></svg>
<svg style="left:749px;top:737px" width="23" height="22" viewBox="0 0 23 22"><path d="M2 4Q10 -2 16 3L17 18Q9 22 3 18Z" fill="#8faec9" stroke="#c9d8e6"/><path d="M6 7Q11 3 13 8T8 15" fill="none" stroke="#e6eef5" stroke-width="1.500"/><circle cx="18" cy="16" r="4" fill="#ddd" stroke="#333"/></svg>
<div style="left:593px;top:766px;width:39px;height:2px;background:#f4cdb4"></div>
<div style="left:688px;top:766px;width:47px;height:2px;background:#f4cdb4"></div>
<div style="left:740px;top:766px;width:40px;height:2px;background:#f4cdb4"></div>

<svg style="left:1056px;top:743px" width="12" height="8"><path d="M.5 7L6 1.500L11.500 7" fill="none" stroke="#eee" stroke-width="1.300"/></svg>
<svg style="left:1087px;top:743px" width="16" height="10"><rect x=".5" y=".5" width="13" height="9" fill="none" stroke="#fff"/><rect x="2" y="2" width="7" height="6" fill="#fff"/><rect x="14" y="3" width="1.500" height="4" fill="#fff"/></svg>
<svg style="left:1120px;top:741px" width="14" height="14"><path d="M1 13Q1 3 12 1M4 13Q4 7 12 4.500M7 13Q7 9.500 12 8" fill="none" stroke="#ccc"/><rect x="10" y="10" width="4" height="4" fill="#fff"/></svg>
<svg style="left:1150px;top:741px" width="17" height="14"><path d="M0 5H3L7 1V13L3 9H0Z" fill="none" stroke="#eee"/><path d="M9 4.500Q10.500 7 9 9.500M11.500 3Q13.500 7 11.500 11M14 1.500Q16.500 7 14 12.500" fill="none" stroke="#777"/></svg>
<svg style="left:1182px;top:740px" width="16" height="17"><path d="M0 0H16V13H10L8 16L6 13H0Z" fill="#fff"/><path d="M3 3.500H13M3 6.500H13M3 9.500H9" stroke="#333"/></svg>
<svg style="left:1214px;top:741px" width="23" height="13"><rect x=".5" y=".5" width="22" height="12" fill="none" stroke="#ddd"/><path d="M3 3.500H20M3 6H20" stroke="#ccc" stroke-dasharray="1.500 1"/><path d="M6 9.500H17" stroke="#ccc"/></svg>
<div class="w" style="left:1243px;top:731px;width:40px;text-align:center;color:#e0e0e0;font-size:12.500px">ENG</div>
<div class="w" style="left:1243px;top:748px;width:40px;text-align:center;color:#e0e0e0;font-size:12.500px">UK</div>
<div class="w" style="left:1291px;top:731px;width:60px;text-align:center;color:#e0e0e0;font-size:12.500px">10:47</div>
<div class="w" style="left:1291px;top:749px;width:60px;text-align:center;color:#e0e0e0;font-size:12px">18/11/2015</div>
<div style="left:1361px;top:728px;width:1px;height:40px;background:#555"></div>
</body></html>
